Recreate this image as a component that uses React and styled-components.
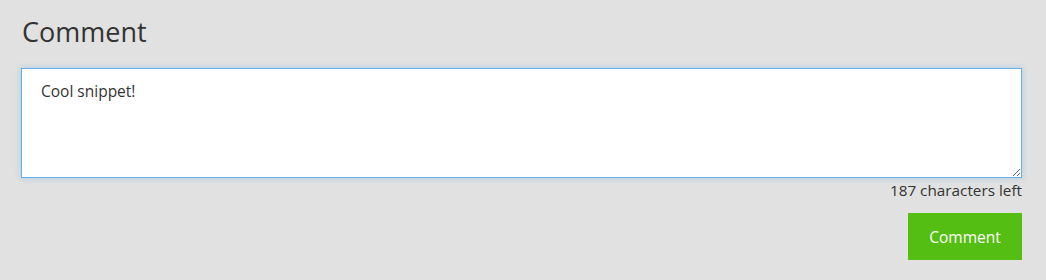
import React, { useEffect, useRef } from "react";
import styled, { createGlobalStyle } from "styled-components";

const Global = createGlobalStyle`
  html, body { margin: 0; padding: 0; background: #e1e1e1; }
  body { font-family: "Open Sans", "Noto Sans", sans-serif; color: #333; }
`;

const Page = styled.div`
  padding: 14px 24px 20px 21px;
  display: flex;
  flex-direction: column;
`;

const Title = styled.h2`
  margin: 0 0 18px 1px;
  font-size: 27px;
  font-weight: 400;
  line-height: 36px;
  color: #333;
`;

const TextArea = styled.textarea`
  box-sizing: border-box;
  width: 100%;
  height: 110px;
  padding: 10px 19px;
  border: 1px solid #66afe9;
  background: #fff;
  font-family: inherit;
  font-size: 15.5px;
  line-height: 24px;
  color: #333;
  caret-color: #111;
  outline: none;
  box-shadow: 0 0 6px rgba(102, 175, 233, 0.45);
  resize: vertical;
  display: block;
`;

const Counter = styled.div`
  text-align: right;
  font-size: 15.3px;
  line-height: 22px;
  margin-top: 1px;
  color: #333;
`;

const Actions = styled.div`
  display: flex;
  justify-content: flex-end;
  margin-top: 12px;
`;

const Button = styled.button`
  background: #55be12;
  color: #fff;
  border: none;
  border-radius: 0;
  width: 114px;
  height: 47px;
  font-family: inherit;
  font-size: 15.5px;
  cursor: pointer;
`;

export default function App() {
  const ref = useRef(null);
  useEffect(() => {
    const el = ref.current;
    if (el) {
      el.focus();
      const n = el.value.length;
      el.setSelectionRange(n, n);
    }
  }, []);
  return (
    <>
      <Global />
      <Page>
        <Title>Comment</Title>
        <TextArea ref={ref} defaultValue="Cool snippet!" />
        <Counter>187 characters left</Counter>
        <Actions>
          <Button>Comment</Button>
        </Actions>
      </Page>
    </>
  );
}
